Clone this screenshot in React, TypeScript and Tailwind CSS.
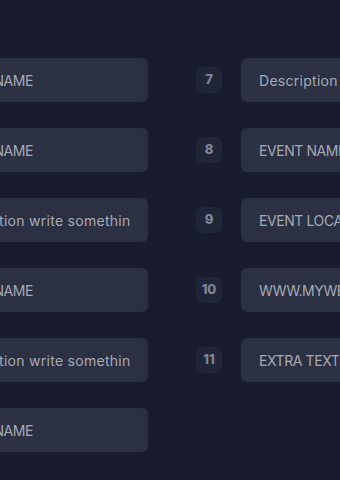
import React from 'react';

const leftFields = [
  { id: 1, value: 'EVENT NAME' },
  { id: 2, value: 'EVENT NAME' },
  { id: 3, value: 'Description write something here' },
  { id: 4, value: 'EVENT NAME' },
  { id: 5, value: 'Description write something here' },
  { id: 6, value: 'EVENT NAME' },
];

const rightFields = [
  { id: 7, value: 'Description write something here' },
  { id: 8, value: 'EVENT NAME' },
  { id: 9, value: 'EVENT LOCATION' },
  { id: 10, value: 'WWW.MYWEBSITE.COM' },
  { id: 11, value: 'EXTRA TEXT' },
];

// one numbered text row
const FieldRow = ({ id, value }: { id: number; value: string }) => {
  // caps labels run tighter than the sentence ones
  const isCaps = value === value.toUpperCase();
  return (
    <div className="flex items-center gap-[19px]">
      <div className="w-[26px] h-[26px] shrink-0 rounded-md bg-[#202538] flex items-center justify-center text-[13px] font-extrabold text-[#7f8496]">
        {id}
      </div>
      <div className="w-[220px] h-[44px] shrink-0 rounded-md bg-[#2b3042] px-[18px] flex items-center overflow-hidden">
        <span
          className={`min-w-0 whitespace-nowrap overflow-hidden text-[14px] text-[#a6aab5] ${
            isCaps ? 'tracking-[-0.03em]' : 'tracking-[0.02em]'
          }`}
        >
          {value}
        </span>
      </div>
    </div>
  );
};

const App = () => {
  return (
    <div
      className="w-[340px] h-[480px] overflow-hidden bg-[#181c2e]"
      style={{ fontFamily: 'Inter, "Noto Sans", sans-serif' }}
    >
      <div className="ml-[-117px] pt-[58px] flex gap-[48px]">
        <div className="flex flex-col gap-[26px]">
          {leftFields.map((f) => (
            <FieldRow key={f.id} id={f.id} value={f.value} />
          ))}
        </div>
        <div className="flex flex-col gap-[26px]">
          {rightFields.map((f) => (
            <FieldRow key={f.id} id={f.id} value={f.value} />
          ))}
        </div>
      </div>
    </div>
  );
};

export default App;
